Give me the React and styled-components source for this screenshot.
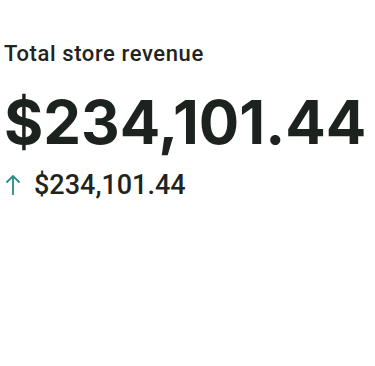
import React from 'react'
import styled, { createGlobalStyle } from 'styled-components'

const GlobalStyle = createGlobalStyle`
  body {
    margin: 0;
    background: #fff;
    font-family: Roboto, "Liberation Sans", sans-serif;
  }
`;

const Card = styled.div`
  padding: 38px 4px 0;
  display: flex;
  flex-direction: column;
  color: #1f2421;
`;

const Label = styled.div`
  font-size: 22px;
  font-weight: 500;
  letter-spacing: 0.6px;
  line-height: 32px;
`;

const Amount = styled.div`
  font-family: Inter, "Liberation Sans", sans-serif;
  font-size: 60px;
  font-weight: 700;
  line-height: 80px;
  margin-top: 12px;
  white-space: nowrap;
  color: #1c231f;
`;

const Change = styled.div`
  display: flex;
  align-items: center;
  gap: 13px;
  margin-top: 7px;
  font-size: 27px;
  font-weight: 500;
  line-height: 32px;
`;

const Arrow = styled.svg`
  width: 16px;
  height: 22px;
  margin-left: 1px;
  color: #2a8a85;
`;

const App = () => (
  <>
    <GlobalStyle />
    <Card>
      <Label>Total store revenue</Label>
      <Amount>$234,101.44</Amount>
      <Change>
        <Arrow viewBox="0 0 16 22" fill="none" stroke="currentColor" strokeWidth="1.8">
          <path d="M8 21V2M1.5 8.5L8 2l6.5 6.5" />
        </Arrow>
        <span>$234,101.44</span>
      </Change>
    </Card>
  </>
)

export default App
